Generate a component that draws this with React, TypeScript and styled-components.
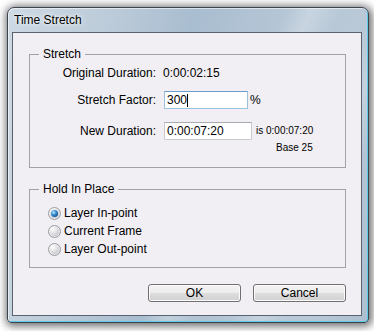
import React from 'react';
import styled, { createGlobalStyle } from 'styled-components';

const Global = createGlobalStyle`
  html, body { margin: 0; padding: 0; background: #ffffff; }
  body {
    font-family: "Liberation Sans", Arial, sans-serif;
    font-size: 12px;
    color: #000;
  }
`;

const Page = styled.div`
  width: 374px;
  height: 331px;
  box-sizing: border-box;
  padding: 7px 0 0 7px;
  overflow: hidden;
  background: #ffffff;
`;

const Window = styled.div`
  width: 362px;
  height: 316px;
  box-sizing: border-box;
  border: 1px solid #3b4450;
  border-radius: 7px 7px 4px 4px;
  padding: 0 6px 6px 4px;
  display: flex;
  flex-direction: column;
  background:
    linear-gradient(115deg, rgba(255,255,255,0) 0%, rgba(255,255,255,0) 55%, rgba(255,255,255,0.25) 60%, rgba(255,255,255,0) 66%, rgba(255,255,255,0) 72%, rgba(255,255,255,0.2) 78%, rgba(255,255,255,0) 84%),
    linear-gradient(100deg, #cdd9e4 0%, #bccbd9 25%, #a9bdd0 45%, #b4c5d5 65%, #b9c9d8 85%, #aebfd0 100%);
  box-shadow:
    inset 1px 1px 0 rgba(255,255,255,0.55),
    inset -1px -1px 0 #5fcbe6,
    1px 1px 9px 2px rgba(0, 0, 0, 0.6);
`;

const TitleBar = styled.div`
  height: 24px;
  flex: none;
  display: flex;
  align-items: center;
  padding-left: 2px;
  font-size: 12px;
  color: #000;
  text-shadow: 0 0 6px rgba(255,255,255,0.95), 0 0 3px rgba(255,255,255,0.8);
`;

const Client = styled.div`
  flex: 1;
  box-sizing: border-box;
  border: 1px solid #5a626e;
  background: #f1eff4;
  padding: 14px 15px 13px 16px;
  display: flex;
  flex-direction: column;
`;

const Group = styled.fieldset<{ $top?: number }>`
  margin: ${p => p.$top ?? 0}px 0 0 0;
  padding: 0;
  min-width: 0;
  border: 1px solid #a2a2a2;
  display: flex;
  flex-direction: column;
`;

const Legend = styled.legend`
  margin-left: 9px;
  padding: 0 4px;
  font-size: 12px;
  line-height: 14px;
`;

const StretchBody = styled.div`
  padding: 3px 0 13px 0;
  display: flex;
  flex-direction: column;
`;

const FieldRow = styled.div<{ $top?: number }>`
  display: grid;
  grid-template-columns: 126px auto auto 1fr;
  column-gap: 8px;
  align-items: center;
  height: 18px;
  margin-top: ${p => p.$top ?? 0}px;
`;

const Label = styled.span`
  text-align: right;
  white-space: nowrap;
`;

const Value = styled.span`
  margin-left: -1px;
`;

const TextBox = styled.div<{ $w: number; $focus?: boolean }>`
  box-sizing: border-box;
  width: ${p => p.$w}px;
  height: 18px;
  background: #ffffff;
  border: 1px solid ${p => (p.$focus ? '#9cc2e2' : '#c9cacf')};
  border-top-color: ${p => (p.$focus ? '#6d9ccb' : '#a9abb2')};
  padding: 0 2px;
  display: flex;
  align-items: center;
  line-height: 16px;
`;

const Caret = styled.span`
  display: inline-block;
  width: 1px;
  height: 13px;
  background: #000;
`;

const Unit = styled.span<{ $shift: number }>`
  margin-left: ${p => p.$shift}px;
`;

const Small = styled.span<{ $shift?: number }>`
  font-size: 10px;
  line-height: 12px;
  margin-left: ${p => p.$shift ?? 0}px;
  white-space: nowrap;
`;

const BaseLine = styled.div`
  height: 12px;
  margin-top: 2px;
  padding-left: 246px;
  display: flex;
  align-items: center;
`;

const RadioList = styled.div`
  padding: 8px 0 9px 18px;
  display: flex;
  flex-direction: column;
`;

const RadioRow = styled.label`
  height: 18px;
  display: flex;
  align-items: center;
  gap: 3px;
`;

const RadioDot = styled.span<{ $checked?: boolean }>`
  position: relative;
  box-sizing: border-box;
  width: 13px;
  height: 13px;
  border-radius: 50%;
  border: 1px solid #9a9ca1;
  background: radial-gradient(circle at 35% 30%, #ffffff 0%, #e4e4e6 35%, #bfc0c4 80%, #aeb0b4 100%);
  box-shadow: inset 0 0 0 1px rgba(255,255,255,0.6);
  &::after {
    content: '';
    display: ${p => (p.$checked ? 'block' : 'none')};
    position: absolute;
    left: 2px;
    top: 2px;
    width: 7px;
    height: 7px;
    border-radius: 50%;
    background: radial-gradient(circle at 38% 35%, #c6eaff 0%, #3f95d8 35%, #145494 75%, #0b3260 100%);
  }
`;

const ButtonBar = styled.div`
  margin-top: 16px;
  display: flex;
  justify-content: flex-end;
  gap: 12px;
`;

const Button = styled.button`
  box-sizing: border-box;
  width: 93px;
  height: 18px;
  padding: 0;
  border: 1px solid #707070;
  border-radius: 3px;
  font-family: "Liberation Sans", Arial, sans-serif;
  font-size: 12px;
  color: #000;
  background: linear-gradient(#f3f3f3 0%, #ececec 50%, #dedede 50%, #d0d0d0 100%);
  box-shadow: inset 0 0 0 1px #fbfbfb;
  line-height: 16px;
`;

export default function App() {
  return (
    <Page>
      <Global />
      <Window>
        <TitleBar>Time Stretch</TitleBar>
        <Client>
          <Group>
            <Legend>Stretch</Legend>
            <StretchBody>
              <FieldRow>
                <Label>Original Duration:</Label>
                <Value>0:00:02:15</Value>
              </FieldRow>
              <FieldRow $top={9}>
                <Label>Stretch Factor:</Label>
                <TextBox $w={84} $focus>
                  300
                  <Caret />
                </TextBox>
                <Unit $shift={-6}>%</Unit>
              </FieldRow>
              <FieldRow $top={13}>
                <Label>New Duration:</Label>
                <TextBox $w={88}>0:00:07:20</TextBox>
                <Small $shift={-4}>is 0:00:07:20</Small>
              </FieldRow>
              <BaseLine>
                <Small>Base 25</Small>
              </BaseLine>
            </StretchBody>
          </Group>
          <Group $top={14}>
            <Legend>Hold In Place</Legend>
            <RadioList>
              <RadioRow>
                <RadioDot $checked />
                Layer In-point
              </RadioRow>
              <RadioRow>
                <RadioDot />
                Current Frame
              </RadioRow>
              <RadioRow>
                <RadioDot />
                Layer Out-point
              </RadioRow>
            </RadioList>
          </Group>
          <ButtonBar>
            <Button>OK</Button>
            <Button>Cancel</Button>
          </ButtonBar>
        </Client>
      </Window>
    </Page>
  );
}
